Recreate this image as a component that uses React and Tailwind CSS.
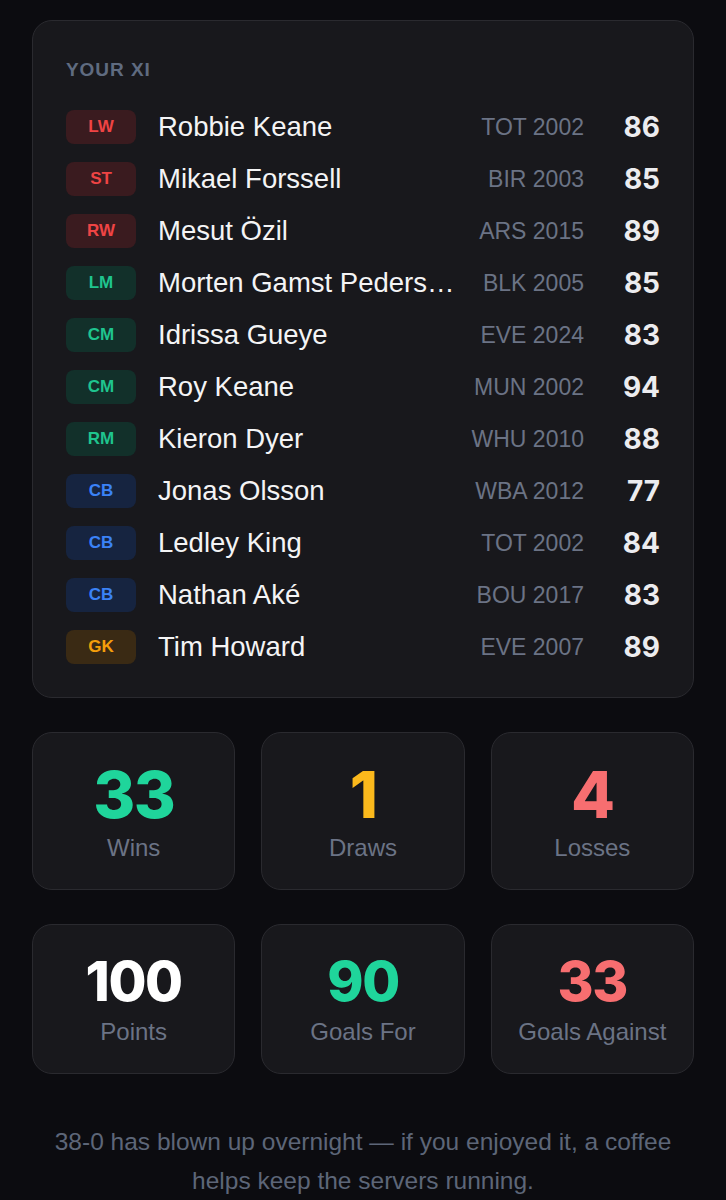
import React from 'react';

const players = [
  { pos: 'LW', name: 'Robbie Keane', club: 'TOT 2002', rating: 86, tone: 'att' },
  { pos: 'ST', name: 'Mikael Forssell', club: 'BIR 2003', rating: 85, tone: 'att' },
  { pos: 'RW', name: 'Mesut Özil', club: 'ARS 2015', rating: 89, tone: 'att' },
  { pos: 'LM', name: 'Morten Gamst Pedersen', club: 'BLK 2005', rating: 85, tone: 'mid' },
  { pos: 'CM', name: 'Idrissa Gueye', club: 'EVE 2024', rating: 83, tone: 'mid' },
  { pos: 'CM', name: 'Roy Keane', club: 'MUN 2002', rating: 94, tone: 'mid' },
  { pos: 'RM', name: 'Kieron Dyer', club: 'WHU 2010', rating: 88, tone: 'mid' },
  { pos: 'CB', name: 'Jonas Olsson', club: 'WBA 2012', rating: 77, tone: 'def' },
  { pos: 'CB', name: 'Ledley King', club: 'TOT 2002', rating: 84, tone: 'def' },
  { pos: 'CB', name: 'Nathan Aké', club: 'BOU 2017', rating: 83, tone: 'def' },
  { pos: 'GK', name: 'Tim Howard', club: 'EVE 2007', rating: 89, tone: 'gk' },
];

// badge colours per line of the team
const badgeTone = {
  att: 'bg-[#3a1b1f] text-[#ef4444]',
  mid: 'bg-[#12302a] text-[#1fc48e]',
  def: 'bg-[#162440] text-[#3b82f6]',
  gk: 'bg-[#3a2a14] text-[#f59e0b]',
};

const StatBox = ({ value, label, color, big }) => (
  <div
    className={`flex flex-col items-center justify-center rounded-[20px] border border-[#2a2a2f] bg-[#18181c] ${
      big ? 'h-[158px]' : 'h-[150px]'
    }`}
  >
    <div
      className={`font-['Inter',sans-serif] font-extrabold leading-none tracking-tight ${color} ${
        big ? 'text-[64px]' : 'text-[55px]'
      }`}
    >
      {value}
    </div>
    <div className={`text-[24px] leading-none text-[#6b7385] ${big ? 'mt-[9px]' : 'mt-[11px]'}`}>{label}</div>
  </div>
);

const App = () => {
  return (
    <div className="min-h-[1200px] bg-[#0c0c10] px-8 pt-5 font-['Liberation_Sans',Arial,sans-serif]">
      <div className="rounded-[20px] border border-[#2a2a2f] bg-[#18181c] px-[33px] pt-[39px] pb-[33px]">
        <div className="text-[19px] font-bold uppercase leading-none tracking-wider text-[#5f6b80]">Your XI</div>

        <div className="mt-[31px] flex flex-col gap-[18px]">
          {players.map((p, i) => (
            <div key={i} className="flex h-[34px] items-center">
              <div
                className={`flex h-[34px] w-[70px] shrink-0 items-center justify-center rounded-lg text-[17px] font-bold ${badgeTone[p.tone]}`}
              >
                {p.pos}
              </div>
              <div className="ml-[22px] min-w-0 flex-1 truncate text-[27.5px] text-[#f4f4f5]">{p.name}</div>
              <div className="w-[128px] shrink-0 text-right text-[23px] text-[#6b7385]">{p.club}</div>
              <div className="w-[76px] shrink-0 text-right font-['Inter',sans-serif] text-[28px] font-bold text-[#ececef]">
                {p.rating}
              </div>
            </div>
          ))}
        </div>
      </div>

      <div className="mt-[34px] grid grid-cols-3 gap-[26px]">
        <StatBox value="33" label="Wins" color="text-[#1fd59b]" big />
        <StatBox value="1" label="Draws" color="text-[#fbb91c]" big />
        <StatBox value="4" label="Losses" color="text-[#f76e70]" big />
      </div>

      <div className="mt-[34px] grid grid-cols-3 gap-[26px]">
        <StatBox value="100" label="Points" color="text-white" />
        <StatBox value="90" label="Goals For" color="text-[#1fd59b]" />
        <StatBox value="33" label="Goals Against" color="text-[#f76e70]" />
      </div>

      <p className="mx-auto mt-[48px] max-w-[650px] text-center text-[24.5px] leading-[39px] text-[#5d6678]">
        38-0 has blown up overnight — if you enjoyed it, a coffee helps keep the servers running.
      </p>
    </div>
  );
};

export default App;
